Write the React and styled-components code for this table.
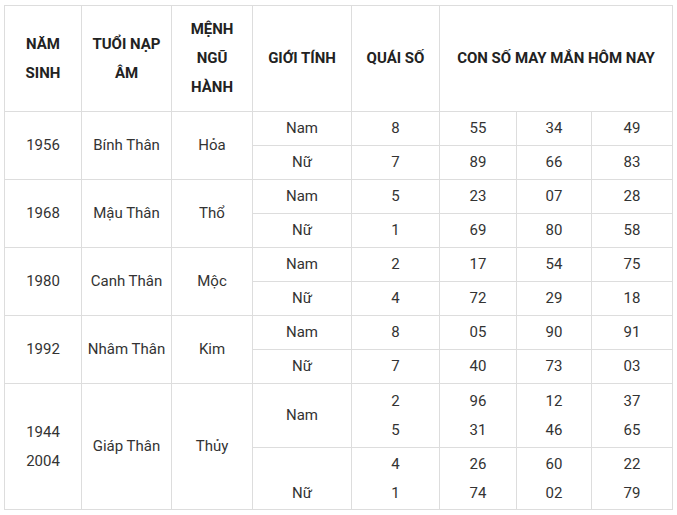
import React from 'react';
import styled, { createGlobalStyle } from 'styled-components';

const GlobalStyle = createGlobalStyle`
  body {
    margin: 0;
    background: #fff;
    font-family: Roboto, "Noto Sans", Arial, sans-serif;
  }
`;

const Page = styled.div`
  padding: 5px 0 0 4px;
`;

const Table = styled.table`
  border-collapse: collapse;
  table-layout: fixed;
  width: 668px;
  color: #333;
  font-size: 15px;
  line-height: 29px;
`;

const Row = styled.tr`
  height: ${p => p.h || 34}px;
`;

const Th = styled.th`
  border: 1px solid #ddd;
  font-weight: 700;
  color: #222;
  text-align: center;
  vertical-align: middle;
  padding: 0 6px;
`;

const Td = styled.td`
  border: 1px solid #ddd;
  text-align: center;
  vertical-align: middle;
  padding: 0 4px;
`;

const widths = [77, 90, 81, 99, 88, 77, 75, 81];

const data = [
  { year: ['1956'], tuoi: 'Bính Thân', menh: 'Hỏa', rows: [['Nam', '8', '55', '34', '49'], ['Nữ', '7', '89', '66', '83']] },
  { year: ['1968'], tuoi: 'Mậu Thân', menh: 'Thổ', rows: [['Nam', '5', '23', '07', '28'], ['Nữ', '1', '69', '80', '58']] },
  { year: ['1980'], tuoi: 'Canh Thân', menh: 'Mộc', rows: [['Nam', '2', '17', '54', '75'], ['Nữ', '4', '72', '29', '18']] },
  { year: ['1992'], tuoi: 'Nhâm Thân', menh: 'Kim', rows: [['Nam', '8', '05', '90', '91'], ['Nữ', '7', '40', '73', '03']] },
];

const multi = lines => lines.map((l, i) => (
  <React.Fragment key={i}>{i > 0 && <br />}{l}</React.Fragment>
));

export default function App() {
  return (
    <Page>
      <GlobalStyle />
      <Table>
        <colgroup>
          {widths.map((w, i) => <col key={i} style={{ width: w }} />)}
        </colgroup>
        <thead>
          <Row h={106}>
            <Th>NĂM<br />SINH</Th>
            <Th>TUỔI NẠP<br />ÂM</Th>
            <Th>MỆNH<br />NGŨ<br />HÀNH</Th>
            <Th>GIỚI TÍNH</Th>
            <Th>QUÁI SỐ</Th>
            <Th colSpan={3}>CON SỐ MAY MẮN HÔM NAY</Th>
          </Row>
        </thead>
        <tbody>
          {data.map(g => g.rows.map((r, i) => (
            <Row key={g.year[0] + i}>
              {i === 0 && (
                <>
                  <Td rowSpan={2}>{multi(g.year)}</Td>
                  <Td rowSpan={2}>{g.tuoi}</Td>
                  <Td rowSpan={2}>{g.menh}</Td>
                </>
              )}
              {r.map((c, j) => <Td key={j}>{c}</Td>)}
            </Row>
          )))}
          <Row h={64}>
            <Td rowSpan={2}>1944<br />2004</Td>
            <Td rowSpan={2}>Giáp Thân</Td>
            <Td rowSpan={2}>Thủy</Td>
            <Td>Nam</Td>
            <Td>2<br />5</Td>
            <Td>96<br />31</Td>
            <Td>12<br />46</Td>
            <Td>37<br />65</Td>
          </Row>
          <Row h={62}>
            <Td><br />Nữ</Td>
            <Td>4<br />1</Td>
            <Td>26<br />74</Td>
            <Td>60<br />02</Td>
            <Td>22<br />79</Td>
          </Row>
        </tbody>
      </Table>
    </Page>
  );
}
